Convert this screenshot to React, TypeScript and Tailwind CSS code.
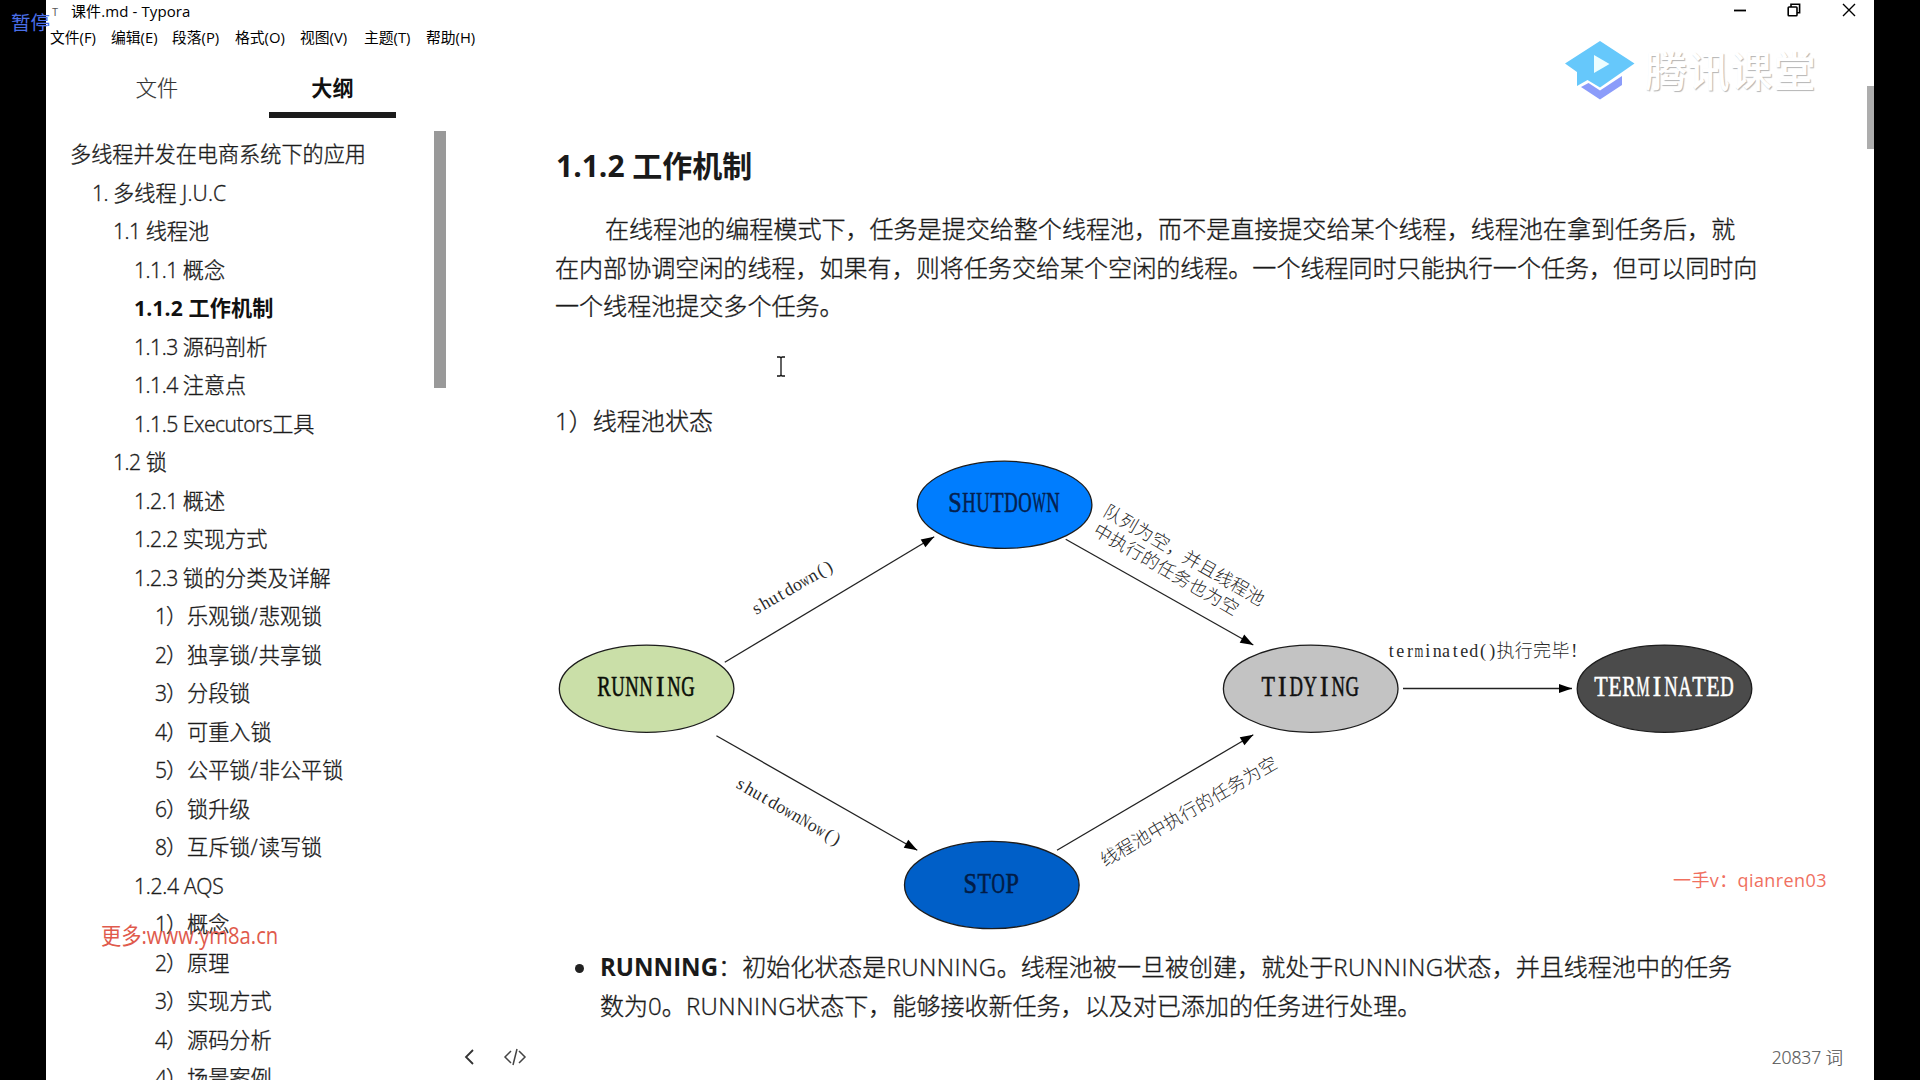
import React from "react";

const menus = [
  { text: "文件(F)", w: "w-[61px]" },
  { text: "编辑(E)", w: "w-[61px]" },
  { text: "段落(P)", w: "w-[63px]" },
  { text: "格式(O)", w: "w-[65px]" },
  { text: "视图(V)", w: "w-[64px]" },
  { text: "主题(T)", w: "w-[62px]" },
  { text: "帮助(H)", w: "w-[63px]" },
];

type OutlineEntry = { level: number; text: string; active?: boolean };

const outline: OutlineEntry[] = [
  { level: 0, text: "多线程并发在电商系统下的应用" },
  { level: 1, text: "1. 多线程 J.U.C" },
  { level: 2, text: "1.1 线程池" },
  { level: 3, text: "1.1.1 概念" },
  { level: 3, text: "1.1.2 工作机制", active: true },
  { level: 3, text: "1.1.3 源码剖析" },
  { level: 3, text: "1.1.4 注意点" },
  { level: 3, text: "1.1.5 Executors工具" },
  { level: 2, text: "1.2 锁" },
  { level: 3, text: "1.2.1 概述" },
  { level: 3, text: "1.2.2 实现方式" },
  { level: 3, text: "1.2.3 锁的分类及详解" },
  { level: 4, text: "1）乐观锁/悲观锁" },
  { level: 4, text: "2）独享锁/共享锁" },
  { level: 4, text: "3）分段锁" },
  { level: 4, text: "4）可重入锁" },
  { level: 4, text: "5）公平锁/非公平锁" },
  { level: 4, text: "6）锁升级" },
  { level: 4, text: "8）互斥锁/读写锁" },
  { level: 3, text: "1.2.4 AQS" },
  { level: 4, text: "1）概念" },
  { level: 4, text: "2）原理" },
  { level: 4, text: "3）实现方式" },
  { level: 4, text: "4）源码分析" },
  { level: 4, text: "4）场景案例" },
];

const indent = ["pl-[24px]", "pl-[46px]", "pl-[67px]", "pl-[88px]", "pl-[109px]"];

const states = [
  { label: "RUNNING", cx: 646.6, cy: 688.7, fill: "#cadfa8", ink: "#0b0f08" },
  { label: "SHUTDOWN", cx: 1004.6, cy: 504.8, fill: "#007dfe", ink: "#04204f" },
  { label: "STOP", cx: 991.8, cy: 885, fill: "#005fc8", ink: "#021c46" },
  { label: "TIDYING", cx: 1310.7, cy: 688.7, fill: "#c3c3c3", ink: "#111111" },
  { label: "TERMINATED", cx: 1664.5, cy: 688.7, fill: "#4b4b4b", ink: "#ffffff" },
];

const arrows = [
  [724.8, 662.3, 934.2, 536.7],
  [716.4, 735.7, 917.3, 850.3],
  [1065.7, 539.3, 1253.3, 645],
  [1057, 850.3, 1253.3, 734.7],
  [1403, 688.5, 1572, 688.5],
];

const labels = [
  { x: 756, y: 615, r: -30, text: "shutdown()" },
  { x: 735, y: 787, r: 30, text: "shutdownNow()" },
  { x: 1102, y: 515, r: 30, text: "队列为空，并且线程池" },
  { x: 1092, y: 534, r: 30, text: "中执行的任务也为空" },
  { x: 1105, y: 867, r: -30, text: "线程池中执行的任务为空" },
  { x: 1387, y: 657, r: 0, text: "terminated()执行完毕!" },
];

/* Letters sit in fixed cells; the wide ones are squeezed to fit. */
function GridChars({ text, cell, wide, narrow }: { text: string; cell: number; wide: string; narrow: string }) {
  let x = 0;
  return (
    <>
      {(text.match(/[\x20-\x7e]|[^\x20-\x7e]+/g) ?? []).map((c, i) => {
        const full = c.charCodeAt(0) > 255;
        const start = x;
        const advance = full ? cell * 2 * c.length : cell;
        x += advance;
        if (full)
          return (
            <tspan key={i} x={start} textLength={advance} lengthAdjust="spacing">
              {c}
            </tspan>
          );
        const centre = start + cell / 2;
        if (wide.includes(c))
          return (
            <tspan key={i} x={centre - cell * 0.48} textLength={cell * 0.96} lengthAdjust="spacingAndGlyphs">
              {c}
            </tspan>
          );
        if (c === "I")
          return (
            <tspan key={i} x={centre - cell * 0.3} textLength={cell * 0.6} lengthAdjust="spacingAndGlyphs">
              {c}
            </tspan>
          );
        if (narrow.includes(c)) return <tspan key={i} x={centre - cell * 0.3}>{c}</tspan>;
        return <tspan key={i} x={centre - cell * 0.48}>{c}</tspan>;
      })}
    </>
  );
}

function StateDiagram() {
  return (
    <svg viewBox="550 456 1210 478" className="block h-[478px] w-[1210px] shrink-0">
      {arrows.map(([x1, y1, x2, y2], i) => {
        const angle = (Math.atan2(y2 - y1, x2 - x1) * 180) / Math.PI;
        return (
          <g key={i}>
            <line x1={x1} y1={y1} x2={x2} y2={y2} stroke="#222" strokeWidth="1.3" />
            <path d="M0 0L-13 -4.6V4.6Z" fill="#000" transform={`translate(${x2} ${y2}) rotate(${angle})`} />
          </g>
        );
      })}
      {states.map((s) => (
        <g key={s.label}>
          <ellipse cx={s.cx} cy={s.cy} rx="87.3" ry="43.6" fill={s.fill} stroke="#1c1c1c" strokeWidth="1.3" />
          <text
            transform={`translate(${s.cx - s.label.length * 7 - 0.5} ${s.cy + 7.6})`}
            fill={s.ink}
            stroke={s.ink}
            strokeWidth="0.6"
            className="font-['Liberation_Serif',serif] text-[30px]"
          >
            <GridChars text={s.label} cell={14} wide="RUNGSHTDOWPYEMA" narrow="" />
          </text>
        </g>
      ))}
      {labels.map((l) => (
        <text
          key={l.text}
          transform={`translate(${l.x} ${l.y}) rotate(${l.r})`}
          fill="#2a2a2a"
          className="font-['Liberation_Serif','Noto_Sans_CJK_SC',serif] text-[18px] font-light"
        >
          <GridChars text={l.text} cell={9.12} wide="wmN" narrow="(t)ri!" />
        </text>
      ))}
    </svg>
  );
}

function OutlineText({ text }: { text: string }) {
  const tracking = (run: string) => {
    if (run === "/") return "tracking-[1.2px]";
    if (run.length === 1) return "tracking-[-1.2px]";
    if (run.includes("J.U.C")) return "tracking-[0.1px]";
    if (run.includes("AQS")) return "tracking-[-0.3px]";
    return "tracking-[-0.5px]";
  };
  return (
    <>
      {text.split(/([\x20-\x7e]+)/).map((run, i) => (i % 2 === 0 ? run : <span key={i} className={tracking(run)}>{run}</span>))}
    </>
  );
}

function TitleBar() {
  return (
    <div className="flex h-6 shrink-0 items-center text-[15px] text-black">
      <span className="w-[25px] pl-[6px] font-['Liberation_Sans',sans-serif] text-[10px] text-[#555]">T</span>
      <span className="pb-[2px] tracking-[0.1px] whitespace-pre">课件.md - Typora</span>
      <div className="ml-auto flex items-center pr-[18px] pb-[4px]">
        <svg width="14" height="14" viewBox="0 0 14 14" className="mr-[40px]">
          <path d="M1 7.5H13" stroke="#000" strokeWidth="1.8" />
        </svg>
        <svg width="14" height="14" viewBox="0 0 14 14" className="mr-[41px]" fill="none" stroke="#000" strokeWidth="1.6">
          <rect x="1.2" y="4" width="8.8" height="8.8" rx="0.8" />
          <path d="M4 4V1.2H12.6V9.8H10" />
        </svg>
        <svg width="14" height="14" viewBox="0 0 14 14">
          <path d="M1 1L13 13M13 1L1 13" stroke="#000" strokeWidth="1.4" />
        </svg>
      </div>
    </div>
  );
}

function Sidebar() {
  return (
    <aside className="flex w-[400px] shrink-0 flex-col text-[21.15px] text-[#1c1c1c]">
      <div className="flex h-[67px] shrink-0 pl-[48px]">
        <div className="flex w-[126px] justify-center pt-[20px] leading-[32px] font-light text-[#333] [-webkit-text-stroke:0.2px]">文件</div>
        <div className="ml-[49px] flex h-[66px] w-[127px] justify-center border-b-[6px] border-[#1c1c1c] pt-[20px] leading-[32px] font-bold text-[#111]">
          大纲
        </div>
      </div>
      <div className="flex min-h-0 flex-1 pt-[12px]">
        <ul className="min-w-0 flex-1 pt-[4px]">
          {outline.map((o, i) => (
            <li
              key={i}
              className={`h-[38.5px] leading-[38.5px] whitespace-pre ${indent[o.level]} ${o.active ? "font-bold text-[#111] tracking-[0.1px]" : "font-light [-webkit-text-stroke:0.35px]"}`}
            >
              {o.active ? o.text : <OutlineText text={o.text} />}
            </li>
          ))}
        </ul>
        <div className="h-[257px] w-[12px] bg-[#999]" />
      </div>
    </aside>
  );
}

function Brand() {
  return (
    <div className="absolute top-[38px] left-[1517px] flex items-center">
      <svg width="74" height="66" viewBox="0 0 74 66">
        <path d="M18 49L25.500 45L37 52.500L59 38V47L37 61.500Z" fill="#8b9cfa" />
        <path d="M37 3L71.500 25.500L37 49.500L24.500 42L14 48V34L2 25.500Z" fill="#66c8fb" />
        <path d="M31 17V35L46.500 26Z" fill="#ecfeff" />
      </svg>
      <span className="ml-[8px] text-[42px] leading-[50px] font-medium tracking-[0.8px] text-white [text-shadow:1px_1px_1px_#b4b4b4]">腾讯课堂</span>
    </div>
  );
}

function En({ children }: { children: string }) {
  return <span className="tracking-[0.45px]">{children}</span>;
}

export default function App() {
  return (
    <div className="relative flex h-[1080px] w-[1920px] overflow-hidden bg-black px-[46px] font-['Open_Sans','Noto_Sans_CJK_SC',sans-serif]">
      <div className="relative flex w-[1828px] flex-col overflow-hidden bg-white">
        <TitleBar />
        <nav className="flex h-7 shrink-0 items-center pb-[2px] pl-[4px] text-[14.8px] text-black">
          {menus.map((m) => (
            <span key={m.text} className={`${m.w} whitespace-pre`}>{m.text}</span>
          ))}
        </nav>
        <div className="flex min-h-0 flex-1">
          <Sidebar />
          <main className="flex min-w-0 flex-1 flex-col text-[24.06px] leading-[38.5px] font-light text-[#1a1a1a] [-webkit-text-stroke:0.35px]">
            <h4 className="mt-[92px] pl-[110px] text-[30px] leading-[44px] font-bold text-[#1a1a1a] [-webkit-text-stroke:0px]">1.1.2 工作机制</h4>
            <div className="mt-[22px] pl-[109px] whitespace-nowrap">
              <p className="pl-[50px]">在线程池的编程模式下，任务是提交给整个线程池，而不是直接提交给某个线程，线程池在拿到任务后，就</p>
              <p>在内部协调空闲的线程，如果有，则将任务交给某个空闲的线程。一个线程同时只能执行一个任务，但可以同时向</p>
              <p>一个线程池提交多个任务。</p>
            </div>
            <p className="mt-[76px] pl-[109px]">1）线程池状态</p>
            <div className="mt-[16px] pl-[104px]">
              <StateDiagram />
            </div>
            <div className="mt-[14px] flex pl-[129px] whitespace-nowrap">
              <span className="mt-[16px] mr-[16px] h-[9px] w-[9px] rounded-full bg-[#222]" />
              <div>
                <p>
                  <b className="font-bold [-webkit-text-stroke:0px]">RUNNING</b>：初始化状态是<En>RUNNING</En>。线程池被一旦被创建，就处于<En>RUNNING</En>状态，并且线程池中的任务
                </p>
                <p>数为0。<En>RUNNING</En>状态下，能够接收新任务，以及对已添加的任务进行处理。</p>
              </div>
            </div>
          </main>
        </div>

        <div className="absolute bottom-0 left-[400px] flex h-[46px] w-[1397px] items-center text-[#444]">
          <svg width="12" height="18" viewBox="0 0 12 18" className="ml-[17px]" fill="none" stroke="#333" strokeWidth="1.8">
            <path d="M10 2L3 9L10 16" />
          </svg>
          <svg width="24" height="18" viewBox="0 0 24 18" className="ml-[28px]" fill="none" stroke="#444" strokeWidth="1.5">
            <path d="M8 3L2 9L8 15M16 3L22 9L16 15M14 1L10 17" />
          </svg>
          <span className="ml-auto text-[17.500px] font-light tracking-[-0.1px] text-[#555] [-webkit-text-stroke:0.2px]">20837 词</span>
        </div>

        <div className="absolute top-[86px] right-0 h-[63px] w-[7px] bg-[#adadad]" />
        <Brand />
        <svg width="10" height="24" viewBox="0 0 10 24" className="absolute top-[355px] left-[730px]" fill="none" stroke="#111" strokeWidth="1.3">
          <path d="M1 2H4L5 3L6 2H9M1 21H4L5 20L6 21H9M5 3V20" />
        </svg>
        <div className="absolute top-[919px] left-[55px] origin-left scale-x-[0.88] text-[23px] leading-[32px] whitespace-nowrap text-[#e05a4c]">更多:www.ym8a.cn</div>
        <div className="absolute top-[866px] left-[1627px] text-[18px] leading-[28px] tracking-[0.4px] whitespace-nowrap text-[#f0705f]">一手v：qianren03</div>
      </div>
      <div className="absolute top-[9px] left-[11px] text-[19.5px] leading-[28px] whitespace-nowrap text-[#4a6fe8]">暂停</div>
    </div>
  );
}
